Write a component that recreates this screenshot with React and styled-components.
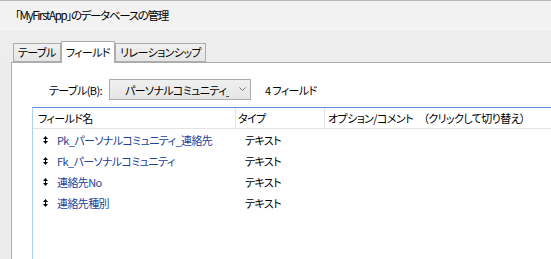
import styled, { createGlobalStyle } from "styled-components";

const GlobalStyle = createGlobalStyle`
  html, body {
    margin: 0;
    padding: 0;
    background: #ececec;
  }
  body {
    font-family: "Noto Sans CJK JP", "Noto Sans", sans-serif;
    font-feature-settings: "palt";
    font-size: 11px;
    letter-spacing: -0.6px;
    color: #000;
  }
`;

const fields = [
  { name: "Pk_パーソナルコミュニティ_連絡先", type: "テキスト" },
  { name: "Fk_パーソナルコミュニティ", type: "テキスト" },
  { name: "連絡先No", type: "テキスト" },
  { name: "連絡先種別", type: "テキスト" },
];

const SortIcon = () => (
  <svg width="5" height="8" viewBox="0 0 5 8">
    <path d="M2.5 0 L5 3 L0 3 Z" fill="#000" />
    <path d="M2.5 8 L5 5 L0 5 Z" fill="#000" />
    <rect x="2" y="2" width="1" height="4" fill="#000" />
  </svg>
);

const App = () => {
  return (
    <Window>
      <GlobalStyle />
      <TitleBar>「MyFirstApp」のデータベースの管理</TitleBar>
      <TabStrip>
        <Tab>テーブル</Tab>
        <Tab $active>フィールド</Tab>
        <Tab>リレーションシップ</Tab>
      </TabStrip>
      <Body>
        <Panel>
          <Toolbar>
            <Label>テーブル(B):</Label>
            <Select>
              <SelectText>パーソナルコミュニティ_連絡先</SelectText>
              <Chevron>
                <svg width="7" height="5" viewBox="0 0 7 5">
                  <path d="M0.5 0.5 L3.5 3.5 L6.5 0.5" stroke="#777" fill="none" />
                </svg>
              </Chevron>
            </Select>
            <Count>4 フィールド</Count>
          </Toolbar>
          <List>
            <Header>
              <HeadCell $w={203} $pad={5}>フィールド名</HeadCell>
              <HeadCell $w={89} $pad={2}>タイプ</HeadCell>
              <HeadCell $pad={3} $last>オプション/コメント　（クリックして切り替え）</HeadCell>
            </Header>
            <Rows>
              {fields.map((f) => (
                <Row key={f.name}>
                  <NameCell>
                    <SortIcon />
                    <FieldName>{f.name}</FieldName>
                  </NameCell>
                  <TypeCell>{f.type}</TypeCell>
                </Row>
              ))}
            </Rows>
          </List>
        </Panel>
      </Body>
    </Window>
  );
};

const Window = styled.div`
  width: 551px;
  height: 259px;
  overflow: hidden;
  display: flex;
  flex-direction: column;
  background: #ececec;
`;

const TitleBar = styled.div`
  flex-shrink: 0;
  height: 30px;
  border-top: 1px solid #b8b8b8;
  background: #f2f2f2;
  padding-left: 15px;
  font-size: 11.5px;
  letter-spacing: -1.3px;
  line-height: 29px;
  white-space: nowrap;
`;

const TabStrip = styled.div`
  flex-shrink: 0;
  height: 31px;
  display: flex;
  align-items: flex-end;
  padding-left: 13px;
  background: #ededed;
  position: relative;
  z-index: 1;
`;

const Tab = styled.div`
  height: ${(p) => (p.$active ? "22px" : "19px")};
  margin-bottom: ${(p) => (p.$active ? "-1px" : "0")};
  box-sizing: border-box;
  border: 1px solid #acacac;
  border-bottom: ${(p) => (p.$active ? "none" : "1px solid #acacac")};
  background: ${(p) =>
    p.$active ? "#fff" : "linear-gradient(#f0f0f0, #e5e5e5)"};
  padding: 0 4px;
  line-height: ${(p) => (p.$active ? "20px" : "17px")};
  white-space: nowrap;
  & + & {
    border-left: ${(p) => (p.$active ? "1px solid #acacac" : "none")};
  }
`;

const Body = styled.div`
  flex: 1;
  min-height: 0;
  padding-left: 11px;
  display: flex;
`;

const Panel = styled.div`
  flex: 1;
  background: #fff;
  border-left: 1px solid #acacac;
  border-top: 1px solid #acacac;
  padding: 16px 0 0 20px;
  overflow: hidden;
`;

const Toolbar = styled.div`
  display: flex;
  align-items: center;
  height: 21px;
  padding-left: 17px;
`;

const Label = styled.span`
  width: 60px;
  white-space: nowrap;
`;

const Select = styled.div`
  flex-shrink: 0;
  width: 142px;
  height: 21px;
  box-sizing: border-box;
  border: 1px solid #acacac;
  background: linear-gradient(#f0f0f0, #e5e5e5);
  display: flex;
  align-items: center;
  padding-left: 15px;
  overflow: hidden;
`;

const SelectText = styled.span`
  width: 104px;
  flex-shrink: 0;
  overflow: hidden;
  white-space: nowrap;
`;

const Chevron = styled.span`
  display: flex;
  margin-left: 10px;
`;

const Count = styled.span`
  margin-left: 14px;
  white-space: nowrap;
`;

const List = styled.div`
  margin-top: 7px;
  border-left: 1px solid #a6d2f0;
  border-top: 1px solid #5b8fc9;
  height: 200px;
`;

const Header = styled.div`
  display: flex;
  height: 20px;
  border-bottom: 1px solid #e3e3e3;
`;

const HeadCell = styled.div`
  width: ${(p) => (p.$w ? `${p.$w}px` : "auto")};
  flex: ${(p) => (p.$w ? "none" : "1")};
  padding-left: ${(p) => p.$pad}px;
  box-sizing: border-box;
  border-right: ${(p) => (p.$last ? "none" : "1px solid #e3e3e3")};
  line-height: 20px;
  white-space: nowrap;
`;

const Rows = styled.div``;

const Row = styled.div`
  display: flex;
  align-items: center;
  height: 21px;
`;

const NameCell = styled.div`
  width: 212px;
  display: flex;
  align-items: center;
  padding-left: 10px;
  box-sizing: border-box;
`;

const FieldName = styled.span`
  margin-left: 9px;
  color: #213f99;
  white-space: nowrap;
`;

const TypeCell = styled.div`
  white-space: nowrap;
`;

export default App;
